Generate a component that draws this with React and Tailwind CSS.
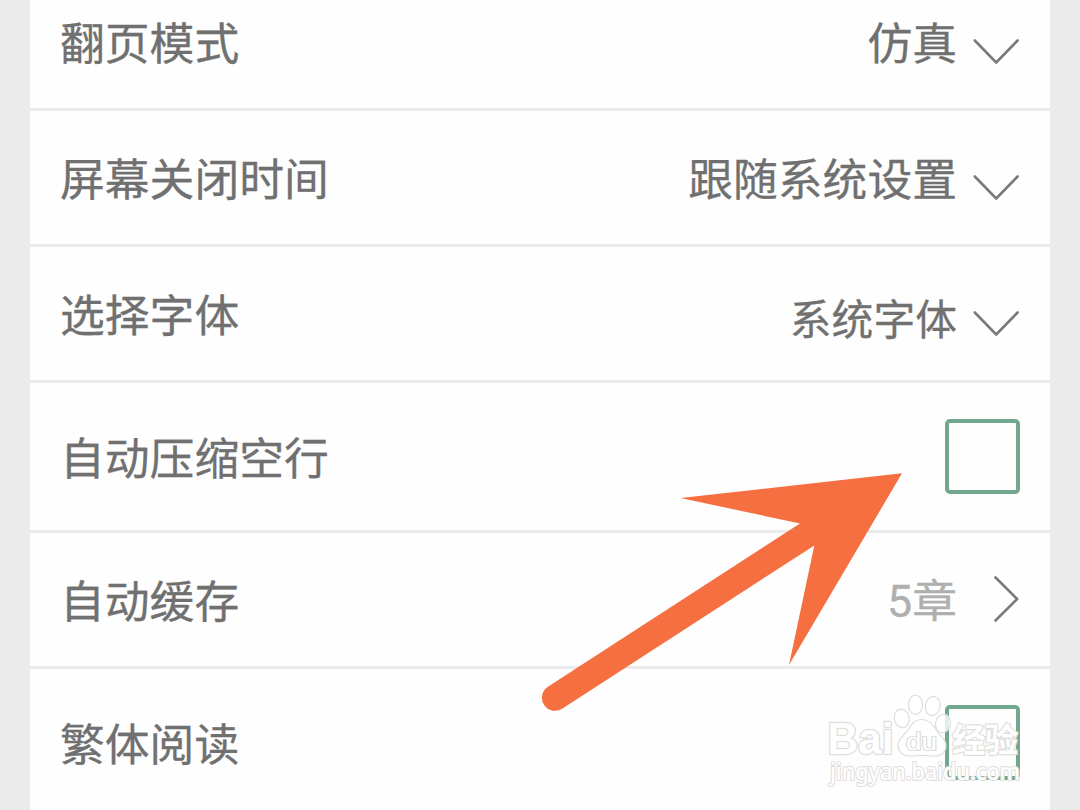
const rows = [
  { label: '翻页模式', value: '仿真', type: 'select', size: 'h-[111px]' },
  { label: '屏幕关闭时间', value: '跟随系统设置', type: 'select', size: 'h-[136px]' },
  { label: '选择字体', value: '系统字体', type: 'select', small: true, size: 'h-[136px]' },
  { label: '自动压缩空行', type: 'checkbox', size: 'h-[150px]' },
  { label: '自动缓存', value: '5章', type: 'link', size: 'h-[136px]' },
  { label: '繁体阅读', type: 'checkbox', size: 'h-[150px]' },
];

function ChevronDown() {
  return (
    <svg className="block w-[46px] h-[26px] ml-4 mr-px mt-[18px]" viewBox="0 0 46 26" fill="none" stroke="#7a7a7a" strokeWidth="2.6" strokeLinecap="round" strokeLinejoin="round">
      <path d="M1.8 2.5L23.2 24.5L44.6 2.5" />
    </svg>
  );
}

function ChevronRight() {
  return (
    <svg className="block w-[26px] h-[46px] ml-9 mr-px mb-[2px]" viewBox="0 0 26 46" fill="none" stroke="#7a7a7a" strokeWidth="2.6" strokeLinecap="round" strokeLinejoin="round">
      <path d="M2.5 1.5L24.2 23L2.5 44.5" />
    </svg>
  );
}

function Checkbox() {
  return <span className="block w-[75px] h-[75px] border-4 border-[#70a78d] rounded-[5px]" />;
}

function Row({ row, first }) {
  // the first row is scrolled partly out of view, so its content keeps the full height
  const cell = first ? 'h-[133px] shrink-0 flex items-center' : 'flex items-center';

  return (
    <div className={`${row.size} shrink-0 flex justify-between border-b-[3px] border-[#ebebeb] px-[30px] ${first ? 'items-end' : 'items-center'}`}>
      <div className={cell}>
        <span className="text-[44.8px] leading-[60px] pb-[2px]">{row.label}</span>
      </div>
      <div className={cell}>
        {row.type === 'checkbox' && <Checkbox />}
        {row.type === 'select' && (
          <>
            <span className={row.small ? 'text-[41.8px] leading-[60px] pt-[6px]' : 'text-[44.8px] leading-[60px] pb-[2px]'}>{row.value}</span>
            <ChevronDown />
          </>
        )}
        {row.type === 'link' && (
          <>
            <span className="text-[44.8px] leading-[60px] pt-[4px] text-[#afafaf] font-[Roboto,'Noto_Sans_CJK_SC',sans-serif]">{row.value}</span>
            <ChevronRight />
          </>
        )}
      </div>
    </div>
  );
}

function Arrow() {
  return (
    <svg className="absolute left-[540px] top-[470px] w-[364px] h-[244px]" viewBox="540 470 364 244" fill="#f66f40">
      <path d="M902 473.3L680.5 498L800 523.5L547.5 687A12.8 12.8 0 0 0 562.5 708.5L814.3 545.5L789 665Z" />
    </svg>
  );
}

function Watermark() {
  return (
    <svg className="absolute left-[820px] top-[688px] w-[210px] h-[110px]" viewBox="820 688 210 110" fill="#fff" stroke="#dedede" strokeWidth="1.2" strokeLinejoin="round">
      <g fillOpacity="0.8">
        <ellipse cx="901.7" cy="718.3" rx="7.4" ry="9.3" transform="rotate(-12 901.7 718.3)" />
        <ellipse cx="915.5" cy="704.7" rx="7" ry="9.7" />
        <ellipse cx="932.7" cy="706" rx="7.4" ry="9.6" transform="rotate(10 932.7 706)" />
        <ellipse cx="943" cy="723.5" rx="7.4" ry="9.3" transform="rotate(12 943 723.5)" />
        <path d="M922 719.5C929 719.5 933 724 937 731C941 738 946 738 946 746C946 753 940 757 932 756C925 755 919 755 912 756C904 757 898 752 898 745C898 738 904 736 908 730C912 723 915 719.5 922 719.5Z" />
      </g>
      <g fontFamily="'Liberation Sans', sans-serif" fontWeight="700" paintOrder="stroke">
        <text x="827.5" y="754" fontSize="43.5" textLength="66" lengthAdjust="spacingAndGlyphs" strokeWidth="2.6">Bai</text>
        <text x="906" y="749.5" fontSize="23" fontWeight="400" textLength="31" lengthAdjust="spacingAndGlyphs" strokeWidth="2.2">du</text>
      </g>
      <text x="952" y="752" fontSize="33.5" fontWeight="700" fontFamily="'Noto Sans CJK SC', sans-serif" textLength="66" strokeWidth="2.4" paintOrder="stroke">经验</text>
      <text x="830" y="779.5" fontSize="23" fontFamily="'Noto Sans', sans-serif" fontWeight="500" strokeWidth="2.2" paintOrder="stroke" textLength="190" lengthAdjust="spacingAndGlyphs">jingyan.baidu.com</text>
    </svg>
  );
}

export default function App() {
  return (
    <div className="relative w-[1080px] h-[810px] overflow-hidden bg-[#ebebeb] px-[30px] text-[#707070] font-['Noto_Sans_CJK_SC',sans-serif] [-webkit-text-stroke:0.3px]">
      <main className="h-full flex flex-col overflow-hidden bg-[#fefefe]">
        {rows.map((row, i) => (
          <Row key={row.label} row={row} first={i === 0} />
        ))}
      </main>
      <Arrow />
      <Watermark />
    </div>
  );
}
